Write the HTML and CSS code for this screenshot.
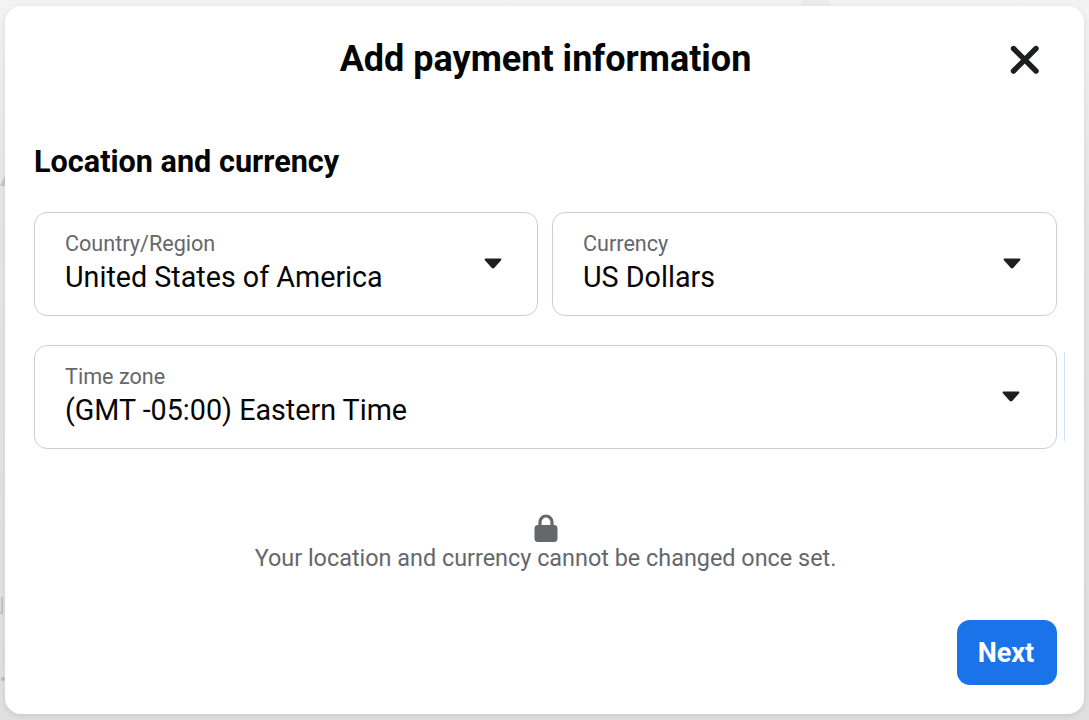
FILE: index.html
```html
<!DOCTYPE html>
<html lang="en">
<head>
    <meta charset="UTF-8">
    <title>Add payment information</title>
    <link rel="stylesheet" href="styles.css">
</head>
<body>
    <!-- bits of the page behind the dialog -->
    <div class="behind behind-tab"></div>
    <div class="behind behind-arrow"></div>
    <div class="behind behind-stem"></div>
    <div class="behind behind-dot"></div>

    <div class="dialog">
        <div class="dialog-header">
            <h1>Add payment information</h1>
            <button class="close-btn" aria-label="Close">
                <svg width="30" height="30" viewBox="0 0 30 30"><path d="M3.500 3.500L26 26M26 3.500L3.500 26" stroke="#1c1e21" stroke-width="5.400" stroke-linecap="round" fill="none"/></svg>
            </button>
        </div>

        <h2>Location and currency</h2>

        <div class="field-row">
            <div class="field field-country">
                <div class="field-text">
                    <div class="field-label">Country/Region</div>
                    <div class="field-value">United States of America</div>
                </div>
                <svg class="caret" width="18" height="12" viewBox="0 0 18 12"><path d="M1.600 .6h14.800c.9 0 1.300 1 .7 1.600l-6.700 7.600c-.8.8-2 .8-2.800 0L.9 2.200C.3 1.600 .7 .6 1.600 .6z" fill="#1c1e21"/></svg>
            </div>
            <div class="field">
                <div class="field-text">
                    <div class="field-label">Currency</div>
                    <div class="field-value">US Dollars</div>
                </div>
                <svg class="caret" width="18" height="12" viewBox="0 0 18 12"><path d="M1.600 .6h14.800c.9 0 1.300 1 .7 1.600l-6.700 7.600c-.8.8-2 .8-2.800 0L.9 2.200C.3 1.600 .7 .6 1.600 .6z" fill="#1c1e21"/></svg>
            </div>
        </div>

        <div class="field-row timezone-row">
            <div class="field">
                <div class="field-text">
                    <div class="field-label">Time zone</div>
                    <div class="field-value">(GMT -05:00) Eastern Time</div>
                </div>
                <svg class="caret" width="18" height="12" viewBox="0 0 18 12"><path d="M1.600 .6h14.800c.9 0 1.300 1 .7 1.600l-6.700 7.600c-.8.8-2 .8-2.800 0L.9 2.200C.3 1.600 .7 .6 1.600 .6z" fill="#1c1e21"/></svg>
            </div>
            <div class="scroll-line"></div>
        </div>

        <div class="note">
            <svg width="24" height="28" viewBox="0 0 24 28"><path d="M6 13V8a6 6 0 0 1 12 0v5" stroke="#65676b" stroke-width="3.200" fill="none"/><rect x=".5" y="11" width="23" height="17" rx="3.500" fill="#65676b"/></svg>
            <p>Your location and currency cannot be changed once set.</p>
        </div>

        <div class="dialog-footer">
            <button class="next-btn">Next</button>
        </div>
    </div>
</body>
</html>
```

FILE: styles.css
```css
html, body {
    height: 100%;
}
body {
    margin: 0;
    padding: 6px 5px;
    box-sizing: border-box;
    overflow: hidden;
    background: linear-gradient(to bottom, #f3f3f3, #e6e6e6 30%, #e0e0e0);
    font-family: Roboto, "Liberation Sans", sans-serif;
    color: #050505;
}
.behind {
    position: absolute;
}
.behind-tab {
    left: 801px;
    top: 0;
    width: 29px;
    height: 6px;
    background-color: #ececec;
}
.behind-arrow {
    left: 0;
    top: 176px;
    border-style: solid;
    border-width: 0 0 10px 5px;
    border-color: transparent transparent #c8c8c8 transparent;
}
.behind-stem {
    left: 0;
    top: 597px;
    width: 3px;
    height: 17px;
    border-right: 2px solid #c4c4c4;
    border-bottom: 2px solid #c4c4c4;
    box-sizing: border-box;
}
.behind-dot {
    left: 1px;
    top: 677px;
    width: 4px;
    height: 4px;
    border-radius: 50%;
    background-color: #bbb;
}
.dialog {
    position: relative;
    height: 708px;
    box-sizing: border-box;
    padding: 0 27px 29px 29px;
    background-color: #fff;
    border-radius: 16px;
    box-shadow: 0 2px 6px rgba(0,0,0,0.1);
    display: flex;
    flex-direction: column;
}
.dialog-header {
    height: 106px;
    flex-shrink: 0;
    display: flex;
    align-items: center;
    justify-content: center;
    position: relative;
}
h1 {
    margin: 0;
    font-size: 36px;
    font-weight: 700;
    line-height: 42px;
}
.close-btn {
    position: absolute;
    right: 17px;
    top: 39px;
    width: 30px;
    height: 30px;
    padding: 0;
    border: none;
    background: none;
    display: flex;
}
h2 {
    margin: 31px 0 32px;
    font-size: 30.6px;
    font-weight: 700;
    line-height: 37px;
}
.field-row {
    display: flex;
    gap: 14px;
}
.field {
    flex: 1;
    height: 104px;
    box-sizing: border-box;
    padding: 0 35px 0 30px;
    border: 1px solid #ccd0d5;
    border-radius: 13px;
    display: flex;
    align-items: center;
    justify-content: space-between;
}
.field-country {
    flex: 0 0 504px;
}
.field-text {
    margin-top: -1px;
}
.field-label {
    font-size: 21.6px;
    line-height: 25px;
    margin-bottom: 1px;
    color: #65676b;
}
.field-value {
    font-size: 28.7px;
    line-height: 40px;
    color: #050505;
}
.caret {
    margin-top: -1px;
}
.timezone-row {
    margin-top: 29px;
    margin-right: -8px;
    gap: 7px;
}
.timezone-row .field {
    padding-right: 36px;
}
.scroll-line {
    width: 1px;
    margin: 7px 0 8px;
    background-color: #cfe2fb;
}
.note {
    margin-top: 65px;
    display: flex;
    flex-direction: column;
    align-items: center;
    color: #65676b;
}
.note p {
    margin: 2px 0 0;
    font-size: 23.4px;
    line-height: 29px;
}
.dialog-footer {
    margin-top: auto;
    display: flex;
    justify-content: flex-end;
}
.next-btn {
    width: 100px;
    height: 65px;
    padding: 0 2px 0 0;
    border: none;
    border-radius: 13px;
    background-color: #1a73e8;
    color: #fff;
    font-family: inherit;
    font-size: 27px;
    font-weight: 700;
}
```
